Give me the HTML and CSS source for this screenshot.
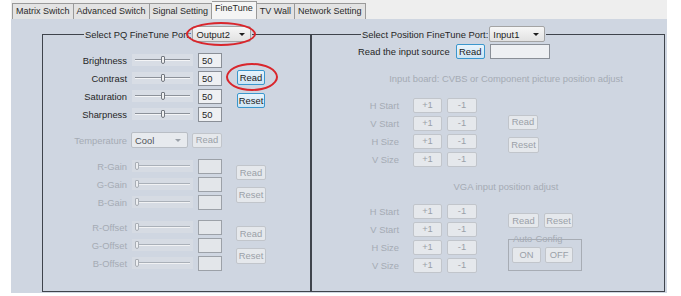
FILE: index.html
```html
<!DOCTYPE html>
<html lang="en">
<head>
<meta charset="utf-8">
<title>FineTune</title>
<link rel="stylesheet" href="styles.css">
</head>
<body>
<div class="app">
  <nav class="tabs">
    <span class="tab">Matrix Switch</span>
    <span class="tab">Advanced Switch</span>
    <span class="tab">Signal Setting</span>
    <span class="tab active">FineTune</span>
    <span class="tab">TV Wall</span>
    <span class="tab">Network Setting</span>
  </nav>
  <main class="panel">
    <fieldset class="group pq">
      <legend class="legend legend-pq">
        <span class="legend-text">Select PQ FineTune Port:</span>
        <span class="select sel-output">Output2<i class="arrow"></i><span class="ring ring-sel"></span></span>
      </legend>
      <div class="pq-body">
        <div class="blk b1">
          <div class="rows">
            <span class="lbl">Brightness</span><div class="slider"><i class="thumb"></i></div><div class="box">50</div>
            <span class="lbl">Contrast</span><div class="slider"><i class="thumb"></i></div><div class="box">50</div>
            <span class="lbl">Saturation</span><div class="slider"><i class="thumb"></i></div><div class="box">50</div>
            <span class="lbl">Sharpness</span><div class="slider"><i class="thumb"></i></div><div class="box">50</div>
          </div>
          <div class="btncol">
            <button class="btn blue w28">Read<span class="ring ring-read"></span></button>
            <button class="btn blue w28">Reset</button>
          </div>
        </div>
        <div class="temp">
          <span class="lbl off-t">Temperature</span>
          <span class="select sel-cool off">Cool<i class="arrow off"></i></span>
          <button class="btn off w30 temp-read">Read</button>
        </div>
        <div class="blk b3">
          <div class="rows">
            <span class="lbl off-t">R-Gain</span><div class="slider off"><i class="thumb off"></i></div><div class="box off"></div>
            <span class="lbl off-t">G-Gain</span><div class="slider off"><i class="thumb off"></i></div><div class="box off"></div>
            <span class="lbl off-t">B-Gain</span><div class="slider off"><i class="thumb off"></i></div><div class="box off"></div>
          </div>
          <div class="btncol">
            <button class="btn off w30">Read</button>
            <button class="btn off w30 h16">Reset</button>
          </div>
        </div>
        <div class="blk b4">
          <div class="rows">
            <span class="lbl off-t">R-Offset</span><div class="slider off"><i class="thumb off"></i></div><div class="box off"></div>
            <span class="lbl off-t">G-Offset</span><div class="slider off"><i class="thumb off"></i></div><div class="box off"></div>
            <span class="lbl off-t">B-Offset</span><div class="slider off"><i class="thumb off"></i></div><div class="box off"></div>
          </div>
          <div class="btncol">
            <button class="btn off w30">Read</button>
            <button class="btn off w30 h16">Reset</button>
          </div>
        </div>
      </div>
    </fieldset>

    <fieldset class="group pos">
      <legend class="legend legend-pos">
        <span class="legend-text">Select Position FineTune Port:</span>
        <span class="select sel-input">Input1<i class="arrow"></i></span>
      </legend>
      <div class="pos-body">
        <div class="src">
          <span>Read the input source</span>
          <button class="btn blue w29 src-read">Read</button>
          <div class="box src-box"></div>
        </div>
        <div class="heading h1">Input board: CVBS or Component picture position adjust</div>
        <div class="adj">
          <div class="rows adj-rows">
            <span class="lbl off-t">H Start</span><button class="btn off w29">+1</button><button class="btn off w30">-1</button>
            <span class="lbl off-t">V Start</span><button class="btn off w29">+1</button><button class="btn off w30">-1</button>
            <span class="lbl off-t">H Size</span><button class="btn off w29">+1</button><button class="btn off w30">-1</button>
            <span class="lbl off-t">V Size</span><button class="btn off w29">+1</button><button class="btn off w30">-1</button>
          </div>
          <div class="btncol adj-col">
            <button class="btn off w30">Read</button>
            <button class="btn off w31 h16">Reset</button>
          </div>
        </div>
        <div class="heading h2">VGA input position adjust</div>
        <div class="adj adj2">
          <div class="rows adj-rows">
            <span class="lbl off-t">H Start</span><button class="btn off w29">+1</button><button class="btn off w30">-1</button>
            <span class="lbl off-t">V Start</span><button class="btn off w29">+1</button><button class="btn off w30">-1</button>
            <span class="lbl off-t">H Size</span><button class="btn off w29">+1</button><button class="btn off w30">-1</button>
            <span class="lbl off-t">V Size</span><button class="btn off w29">+1</button><button class="btn off w30">-1</button>
          </div>
          <div class="vga-right">
            <div class="pair">
              <button class="btn off w31">Read</button>
              <button class="btn off w29">Reset</button>
            </div>
            <div class="auto">
              <div class="auto-label">Auto-Config</div>
              <div class="pair pair-auto">
                <button class="btn off w29 h16">ON</button>
                <button class="btn off w28 h16">OFF</button>
              </div>
            </div>
          </div>
        </div>
      </div>
    </fieldset>
  </main>
</div>
</body>
</html>
```

FILE: styles.css
```css
* { box-sizing: border-box; }

body {
  margin: 0;
  background: #ffffff;
  font-family: "Liberation Sans", Arial, sans-serif;
  font-size: 9.4px;
  color: #262626;
}

.app {
  margin-left: 11px;
  width: 656px;
}

/* Tabs */
.tabs {
  display: flex;
  align-items: flex-end;
  height: 19px;
  background: #eeeeee;
  padding-left: 1px;
}
.tab {
  height: 16px;
  line-height: 15px;
  padding: 0 3px;
  font-size: 9px;
  background: #e3e3e3;
  border: 1px solid #9a9a9a;
  border-left: none;
  border-bottom: none;
  white-space: nowrap;
  color: #2a2a2a;
}
.tab:first-child { border-left: 1px solid #9a9a9a; }
.tab.active {
  height: 18px;
  line-height: 13px;
  background: #f5f5f5;
}

/* Panel */
.panel {
  display: flex;
  height: 274px;
  padding: 7px 2px 1px 31px;
  background: #cfd6e1;
}
.group {
  margin: 0;
  padding: 0;
  min-width: 0;
  height: 266px;
  border: 1px solid #3f444c;
}
.pq { width: 269px; }
.pos { width: 354px; }

.legend {
  display: flex;
  align-items: center;
  height: 16px;
  padding: 0 1px;
  gap: 1px;
}
.legend-pq { margin-left: 41px; }
.legend-pos { margin-left: 49px; }
.legend-text { white-space: nowrap; }

/* Select */
.select {
  position: relative;
  display: flex;
  align-items: center;
  height: 16px;
  padding-left: 3px;
  border: 1px solid #a4a4a4;
  border-radius: 2px;
  background: linear-gradient(#f7f7f7, #e2e2e2);
  color: #1e1e1e;
}
.sel-output { width: 59px; }
.sel-input { width: 56px; }
.select.off {
  border-color: #b9bec5;
  background: #e7eaee;
  color: #505359;
}
.sel-cool { width: 57px; margin-left: 4px; }
.arrow {
  margin-left: auto;
  margin-right: 5px;
  width: 0;
  height: 0;
  border-left: 3px solid transparent;
  border-right: 3px solid transparent;
  border-top: 3px solid #1e1e1e;
}
.arrow.off { border-top-color: #9ba1a9; margin-right: 6px; }

/* Annotation rings */
.ring {
  position: absolute;
  border: 2px solid #d9262c;
  border-radius: 50%;
  pointer-events: none;
}
.ring-sel { left: -7px; right: -6px; top: -5px; bottom: -5px; }
.ring-read { left: -12px; right: -14px; top: -8px; bottom: -7px; }

/* Buttons */
.btn {
  font: inherit;
  height: 15px;
  padding: 0;
  border-radius: 2px;
  display: flex;
  align-items: center;
  justify-content: center;
  line-height: 1;
}
.btn.blue {
  position: relative;
  border: 1px solid #3b97cd;
  background: linear-gradient(#e8f4fc, #cde5f5);
  color: #1a1a1a;
}
.btn.off {
  border: 1px solid #c1c5cb;
  background: #e5e8ec;
  color: #9aa0a8;
}
.w28 { width: 28px; }
.w29 { width: 29px; }
.w30 { width: 30px; }
.w31 { width: 31px; }
.h16 { height: 16px; }

/* Left section */
.pq-body { padding-top: 9px; }
.blk {
  display: flex;
  align-items: center;
}
.rows {
  display: grid;
  grid-template-columns: 84px 61px 24px;
  column-gap: 5px;
  grid-auto-rows: 18px;
  align-items: center;
}
.lbl {
  text-align: right;
  white-space: nowrap;
}
.off-t { color: #a5abb4; }

.slider {
  display: flex;
  align-items: center;
  height: 12px;
  background: linear-gradient(#8c9199 0 1px, #f4f5f7 1px 2px) center / calc(100% - 6px) 2px no-repeat, #d8dde5;
}
.slider.off {
  background: linear-gradient(#aab0b8 0 1px, #f1f2f4 1px 2px) center / calc(100% - 6px) 2px no-repeat, #d6dbe3;
}
.thumb {
  display: block;
  margin-left: 29px;
  width: 4px;
  height: 8px;
  border: 1px solid #737880;
  border-radius: 1px 1px 2px 2px;
  background: #f2f2f2;
}
.thumb.off {
  margin-left: 3px;
  border-color: #a9aeb5;
  background: #eceef1;
}

.box {
  height: 15px;
  border: 1px solid #8a8f97;
  background: #eef0f3;
  padding-left: 3px;
  line-height: 13px;
  color: #1e1e1e;
}
.box.off {
  border-color: #9ca1a8;
  background: #e3e6ea;
}

.btncol {
  display: flex;
  flex-direction: column;
  gap: 7px;
  margin-left: 14px;
}
.b1 .btncol {
  margin-left: 15px;
  gap: 8px;
  padding-top: 4px;
}
.temp {
  display: flex;
  align-items: center;
  height: 16px;
  margin-top: 9px;
}
.temp .lbl { width: 84px; }
.temp-read { margin-left: 4px; }
.b3 { margin-top: 9px; }
.b4 { margin-top: 7px; }

/* Right section */
.pos-body { padding-top: 2px; }
.src {
  display: flex;
  align-items: center;
  height: 15px;
  padding-left: 46px;
  white-space: nowrap;
}
.src-read { margin-left: 6px; }
.src-box { width: 60px; margin-left: 5px; }

.heading {
  height: 12px;
  line-height: 12px;
  text-align: center;
  padding-left: 36px;
  color: #a5abb4;
  white-space: nowrap;
}
.h1 { margin-top: 14px; }
.h2 { margin-top: 13px; }

.adj {
  display: flex;
  align-items: center;
  padding-left: 28px;
  margin-top: 11px;
}
.adj-rows {
  grid-template-columns: 68px 29px 30px;
}
.adj-rows .lbl { padding-right: 9px; }
.adj-col {
  margin-left: 31px;
  padding-top: 3px;
}
.adj2 {
  align-items: flex-start;
  margin-top: 9px;
}
.vga-right {
  margin-left: 31px;
  padding-top: 11px;
}
.pair {
  display: flex;
  gap: 5px;
}
.auto {
  margin-top: 11px;
  width: 74px;
  height: 32px;
  border: 1px solid #a7acb4;
  padding: 0 3px;
}
.auto-label {
  margin-top: -7px;
  height: 12px;
  line-height: 12px;
  padding-left: 1px;
  color: #a5abb4;
  white-space: nowrap;
}
.pair-auto {
  gap: 4px;
  margin-top: 2px;
}
```
